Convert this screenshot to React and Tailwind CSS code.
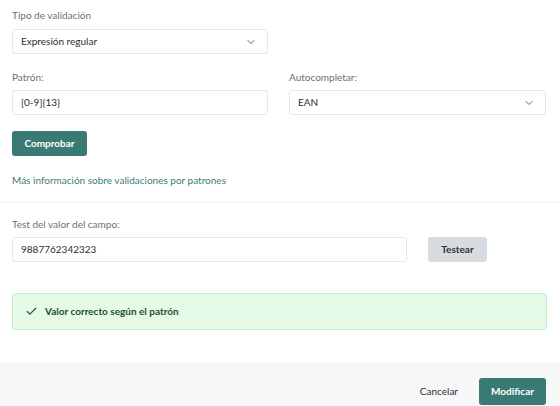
import { Check, ChevronDown } from 'lucide-react';

function Select({ value }) {
  return (
    <div className="flex h-[25px] items-center justify-between rounded-[3px] border border-[#e6e8ea] bg-white pl-[8px] pr-[10px] text-[10px] text-[#2b2f33]">
      <span>{value}</span>
      <ChevronDown size={12} strokeWidth={1.8} className="text-[#4b5258]" />
    </div>
  );
}

function Input({ value }) {
  return (
    <div className="flex h-[25px] items-center rounded-[3px] border border-[#e6e8ea] bg-white px-[8px] text-[10px] text-[#2b2f33]">
      {value}
    </div>
  );
}

function App() {
  return (
    <div className="flex h-[406px] w-[560px] flex-col bg-white text-[#2b2f33]" style={{ fontFamily: 'Lato, "Noto Sans", sans-serif' }}>
      <div className="px-[12px] pr-[14px] pt-[8px]">
        <div className="w-[256px]">
          <label className="block text-[10px] leading-[14px] text-[#6b7177]">Tipo de validación</label>
          <div className="mt-[7px]">
            <Select value="Expresión regular" />
          </div>
        </div>

        <div className="mt-[16px] grid grid-cols-[256px_257px] gap-[21px]">
          <div>
            <label className="block text-[10px] leading-[14px] text-[#6b7177]">Patrón:</label>
            <div className="mt-[6px]">
              <Input value="[0-9]{13}" />
            </div>
          </div>
          <div>
            <label className="block text-[10px] leading-[14px] text-[#6b7177]">Autocompletar:</label>
            <div className="mt-[6px]">
              <Select value="EAN" />
            </div>
          </div>
        </div>

        <button className="mt-[16px] h-[25px] w-[75px] rounded-[3px] bg-[#3a7a74] text-[10px] font-bold text-white">
          Comprobar
        </button>

        <a className="mt-[17px] block text-[10px] leading-[14px] text-[#3b7d77]">
          Más información sobre validaciones por patrones
        </a>
      </div>

      <div className="mt-[15px] h-px bg-[#f1f2f3]" />

      <div className="px-[12px] pr-[13px] pt-[14px]">
        <label className="block text-[10px] leading-[14px] text-[#6b7177]">Test del valor del campo:</label>
        <div className="mt-[6px] flex items-center gap-[21px]">
          <div className="w-[395px]">
            <Input value="9887762342323" />
          </div>
          <button className="h-[25px] w-[59px] rounded-[3px] bg-[#d6dce0] text-[10px] font-bold text-[#2f3438]">
            Testear
          </button>
        </div>

        <div className="mt-[31px] flex h-[37px] items-center gap-[7px] rounded-[3px] border border-[#c8edcc] bg-[#e5f9e7] pl-[12px] text-[10px] font-bold text-[#1e5128]">
          <Check size={13} strokeWidth={2} className="text-[#1e5128]" />
          <span>Valor correcto según el patrón</span>
        </div>
      </div>

      <div className="mt-auto flex h-[43px] items-center justify-end gap-[21px] bg-[#f7f7f7] pr-[14px] pt-[14px]">
        <button className="text-[10px] text-[#2b2f33]">Cancelar</button>
        <button className="h-[27px] w-[67px] rounded-[3px] bg-[#3a7a74] text-[10px] font-bold text-white">
          Modificar
        </button>
      </div>
    </div>
  );
}

export default App;
